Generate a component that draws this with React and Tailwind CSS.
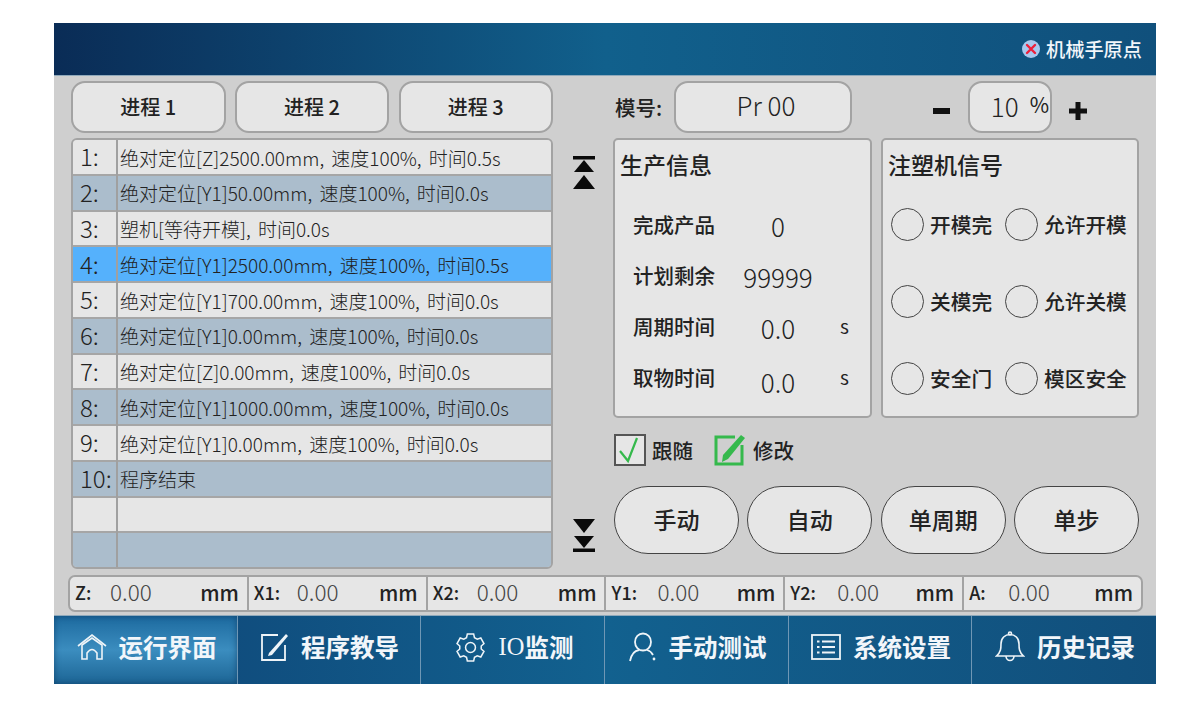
import React from "react";

const font = { fontFamily: '"Noto Sans CJK SC", "Noto Sans", sans-serif' };

const steps = [
  "绝对定位[Z]2500.00mm, 速度100%, 时间0.5s",
  "绝对定位[Y1]50.00mm, 速度100%, 时间0.0s",
  "塑机[等待开模], 时间0.0s",
  "绝对定位[Y1]2500.00mm, 速度100%, 时间0.5s",
  "绝对定位[Y1]700.00mm, 速度100%, 时间0.0s",
  "绝对定位[Y1]0.00mm, 速度100%, 时间0.0s",
  "绝对定位[Z]0.00mm, 速度100%, 时间0.0s",
  "绝对定位[Y1]1000.00mm, 速度100%, 时间0.0s",
  "绝对定位[Y1]0.00mm, 速度100%, 时间0.0s",
  "程序结束",
  "",
  "",
];

const axes = [
  { name: "Z:", w: "w-[35px]" },
  { name: "X1:", w: "w-[43px]" },
  { name: "X2:", w: "w-[44px]" },
  { name: "Y1:", w: "w-[46px]" },
  { name: "Y2:", w: "w-[47px]" },
  { name: "A:", w: "w-[39px]" },
];

function Row({ i, text }) {
  const active = i === 3;
  const bg = active ? "bg-[#55b1fc]" : i % 2 === 1 ? "bg-[#abbdcc]" : "bg-[#e6e6e6]";
  return (
    <div className={`flex h-[35.75px] items-center border-b-2 border-[#a6a6a6] last:border-b-0 ${bg}`}>
      <div className="flex h-full w-[43px] shrink-0 items-center pb-[1px] pl-[7px] text-[24px] font-light text-[#222]">
        {text ? `${i + 1}:` : ""}
      </div>
      <div className="h-[calc(100%+2px)] w-[2px] shrink-0 bg-[#a0a0a0]" />
      <div className="whitespace-nowrap pl-[2px] pt-[2px] text-[19px] font-light [word-spacing:3px] text-[#222]">{text}</div>
    </div>
  );
}

function Stat({ label, value, unit, cls }) {
  return (
    <div className="flex h-[51px] items-center pl-[18px]">
      <span className="w-[100px] text-[20.5px] font-medium text-[#222]">{label}</span>
      <span className={`w-[90px] text-center text-[26px] font-light leading-none text-[#222] ${cls}`}>{value}</span>
      <span className="ml-[17px] text-[19px] text-[#222]">{unit}</span>
    </div>
  );
}

function Signal({ label, w }) {
  return (
    <div className={`flex items-center ${w}`}>
      <div className="h-[33px] w-[33px] shrink-0 rounded-full border border-[#444] bg-[#e6e6e6]" />
      <span className="ml-[6px] whitespace-nowrap text-[20.7px] font-medium text-[#222]">{label}</span>
    </div>
  );
}

function Arrows({ up }) {
  return (
    <svg width="26" height="36" viewBox="0 0 26 36" fill="#0a0a0a">
      {up ? (
        <>
          <rect x="2" y="1" width="22" height="3.5" />
          <path d="M13 5 L23 17 H3 Z" />
          <path d="M13 20 L24 34 H2 Z" />
        </>
      ) : (
        <>
          <path d="M2 2 H24 L13 16 Z" />
          <path d="M3 19 H23 L13 31 Z" />
          <rect x="2" y="31.5" width="22" height="3.5" />
        </>
      )}
    </svg>
  );
}

function NavItem({ icon, label, active, cls }) {
  return (
    <div
      className={`flex h-full items-center justify-center gap-[12px] border-r border-[#6f97b5] pb-[6px] pl-[2px] last:border-r-0 ${cls} ${
        active ? "bg-gradient-to-b from-[#1c6a9f] via-[#3b8dbf] to-[#1c6595] shadow-[inset_0_0_6px_rgba(10,50,90,0.6)]" : ""
      }`}
    >
      {icon}
      <span className="whitespace-nowrap text-[24.5px] font-bold text-[#f2f6fa]">{label}</span>
    </div>
  );
}

const stroke = { fill: "none", stroke: "#eef4f8", strokeWidth: 1.6 };

export default function App() {
  return (
    <div className="h-[712px] w-full overflow-hidden bg-white pl-[54px] pt-[23px]" style={font}>
      <div className="flex h-[661px] w-[1102px] flex-col bg-[#cfcfcf]">
        {/* header */}
        <div className="flex h-[53px] shrink-0 items-center justify-end border-b border-[#8fa9bb] bg-gradient-to-r from-[#0a2c56] via-[#11608c] to-[#10507c] pr-[14px]">
          <svg width="18" height="18" viewBox="0 0 18 18" className="mr-[6px]">
            <circle cx="9" cy="9" r="9" fill="#a9c8ee" />
            <path d="M5 5 L13 13 M13 5 L5 13" stroke="#ee1f3a" strokeWidth="2.4" strokeLinecap="round" />
          </svg>
          <span className="text-[19.2px] font-medium text-[#f2f6fa]">机械手原点</span>
        </div>

        {/* body */}
        <div className="flex h-[499px] shrink-0 pl-[17px] pt-[5px]">
          <div className="flex w-[482px] shrink-0 flex-col">
            <div className="flex h-[52px] justify-between">
              {["进程 1", "进程 2", "进程 3"].map((t) => (
                <div
                  key={t}
                  className="flex w-[154.5px] items-center justify-center rounded-[14px] border-2 border-[#a3a3a3] bg-[#e6e6e6] text-[20px] font-medium text-[#222]"
                >
                  {t}
                </div>
              ))}
            </div>
            <div className="mt-[5px] h-[431px] overflow-hidden rounded-[6px] border-2 border-[#a3a3a3]">
              {steps.map((s, i) => (
                <Row key={i} i={i} text={s} />
              ))}
            </div>
          </div>

          <div className="flex w-[60px] shrink-0 flex-col items-center justify-between pb-[22px] pl-[2px] pt-[74px]">
            <Arrows up />
            <Arrows />
          </div>

          <div className="flex w-[526px] shrink-0 flex-col">
            <div className="flex h-[52px] items-center">
              <span className="ml-[2px] w-[59px] text-[20.5px] font-medium text-[#222]">模号:</span>
              <div className="flex h-full w-[178px] items-center justify-center rounded-[14px] border-2 border-[#a3a3a3] bg-[#e6e6e6] pb-[5px] pl-[6px] text-[26px] font-light text-[#222]">
                Pr 00
              </div>
              <div className="ml-[81px] mt-[8px] h-[6px] w-[17px] bg-[#111]" />
              <div className="ml-[18px] flex h-full w-[84px] items-center justify-end rounded-[14px] border-2 border-[#a3a3a3] bg-[#e6e6e6] pb-[4px] pr-[1px] text-[#222]">
                <span className="text-[26px] font-light">10</span>
                <span className="ml-[11px] text-[21px]">%</span>
              </div>
              <svg width="18" height="18" viewBox="0 0 18 18" className="ml-[17px] mt-[8px]" fill="#111">
                <path d="M6.5 0 H11.5 V6.5 H18 V11.5 H11.5 V18 H6.5 V11.5 H0 V6.5 H6.5 Z" />
              </svg>
            </div>

            <div className="mt-[5px] flex h-[280px] justify-between">
              <div className="w-[259px] rounded-[5px] border-2 border-[#a3a3a3] bg-[#e6e6e6]">
                <div className="pl-[5px] pt-[7px] text-[23px] font-medium leading-[34px] text-[#222]">生产信息</div>
                <div className="mt-[18px]">
                  <Stat label="完成产品" value="0" unit="" cls="pt-[3px]" />
                  <Stat label="计划剩余" value="99999" unit="" cls="pt-[3px]" />
                  <Stat label="周期时间" value="0.0" unit="s" cls="pt-[3px]" />
                  <Stat label="取物时间" value="0.0" unit="s" cls="pt-[9px]" />
                </div>
              </div>
              <div className="w-[258px] rounded-[5px] border-2 border-[#a3a3a3] bg-[#e6e6e6]">
                <div className="pl-[5px] pt-[7px] text-[23px] font-medium leading-[34px] text-[#222]">注塑机信号</div>
                <div className="mt-[27px] flex flex-col gap-[44px] pl-[8px]">
                  <div className="flex">
                    <Signal label="开模完" w="w-[114px]" />
                    <Signal label="允许开模" />
                  </div>
                  <div className="flex">
                    <Signal label="关模完" w="w-[114px]" />
                    <Signal label="允许关模" />
                  </div>
                  <div className="flex">
                    <Signal label="安全门" w="w-[114px]" />
                    <Signal label="模区安全" />
                  </div>
                </div>
              </div>
            </div>

            <div className="mt-[17px] flex h-[30px] items-center pl-[1px]">
              <svg width="32" height="32" viewBox="0 0 32 32">
                <rect x="1" y="1" width="30" height="30" fill="#e6e6e6" stroke="#555" strokeWidth="2" />
                <path d="M6 17 L14 27 L23 4" fill="none" stroke="#35b94c" strokeWidth="2.2" />
              </svg>
              <span className="ml-[6px] text-[20.5px] font-medium text-[#222]">跟随</span>
              <svg width="32" height="32" viewBox="0 0 32 32" className="ml-[21px]">
                <path d="M28 11 V30 H2 V3 H21" fill="none" stroke="#35b94c" strokeWidth="3" />
                <path d="M27 1 L31 4 L14 25 L8 28 L9 21 Z" fill="#35b94c" />
              </svg>
              <span className="ml-[7px] text-[20.5px] font-medium text-[#222]">修改</span>
            </div>

            <div className="mt-[21px] flex h-[68px] justify-between pl-[1px]">
              {["手动", "自动", "单周期", "单步"].map((t) => (
                <div
                  key={t}
                  className="flex w-[125px] items-center justify-center rounded-[34px] border border-[#444] bg-[#e6e6e6] pb-[2px] text-[23px] font-medium text-[#222]"
                >
                  {t}
                </div>
              ))}
            </div>
          </div>
        </div>

        {/* axis readout */}
        <div className="ml-[14px] flex h-[37px] w-[1075px] shrink-0 overflow-hidden rounded-[7px] border-2 border-[#a3a3a3] bg-[#e6e6e6]">
          {axes.map((a) => (
            <div key={a.name} className="flex flex-1 items-center border-r-2 border-[#a3a3a3] pb-[3px] pl-[5px] pr-[8px] text-[#222] last:border-r-0">
              <span className={`${a.w} shrink-0 text-[18px] font-medium`}>{a.name}</span>
              <span className="flex-1 text-[22.5px] font-light text-[#444]">0.00</span>
              <span className="text-[20.5px] font-medium">mm</span>
            </div>
          ))}
        </div>

        {/* bottom nav */}
        <div className="mt-[3px] flex h-[69px] shrink-0 border-t border-[#8fa9bb] bg-gradient-to-r from-[#0f4476] via-[#12618f] to-[#114f7c]">
          <NavItem
            active
            cls="w-[184px]"
            label="运行界面"
            icon={
              <svg width="30" height="28" viewBox="0 0 30 28" {...stroke}>
                <path d="M1 13 L15 2 L29 13" />
                <path d="M5 12 L15 5 L25 12 V26 H20 V20 Q15 13 10 20 V26 H5 Z" />
              </svg>
            }
          />
          <NavItem
            cls="w-[183px]"
            label="程序教导"
            icon={
              <svg width="28" height="28" viewBox="0 0 28 28" {...stroke}>
                <path d="M24 12 V27 H1 V2 H17" strokeWidth="1.8" />
                <path d="M25 1 L27 3 L11 22 L7 23 L8 20 Z" fill="#eef4f8" stroke="none" />
              </svg>
            }
          />
          <NavItem
            cls="w-[184px]"
            label={<span className="flex items-center"><span className="font-normal" style={{ fontFamily: '"Liberation Serif", serif' }}>IO</span>监测</span>}
            icon={
              <svg width="33" height="33" viewBox="0 0 24 24" {...stroke} strokeWidth="1.1">
                <path d="M9.7 2.2 h4.6 l.6 2.7 2 1.1 2.6-.9 2.3 4-2 1.8 v2.2 l2 1.8-2.3 4-2.6-.9-2 1.1-.6 2.7 h-4.6 l-.6-2.7-2-1.1-2.6.9-2.3-4 2-1.8 v-2.2 l-2-1.8 2.3-4 2.6.9 2-1.1 z" />
                <circle cx="12" cy="12" r="3.6" />
              </svg>
            }
          />
          <NavItem
            cls="w-[184px]"
            label="手动测试"
            icon={
              <svg width="28" height="30" viewBox="0 0 28 30" {...stroke} strokeWidth="1.8">
                <ellipse cx="14" cy="10" rx="8" ry="8.5" />
                <path d="M1 29 Q3 19 10 18 M18 18 Q22 19 24 23" />
                <circle cx="25" cy="27" r="1.4" fill="#eef4f8" stroke="none" />
              </svg>
            }
          />
          <NavItem
            cls="w-[183px]"
            label="系统设置"
            icon={
              <svg width="30" height="26" viewBox="0 0 30 26" {...stroke} strokeWidth="1.8">
                <rect x="1" y="1" width="28" height="24" />
                <path d="M11 7.5 H24 M11 13 H24 M11 18.5 H24 M6 7.5 H8.5 M6 13 H8.5 M6 18.5 H8.5" strokeWidth="2" />
              </svg>
            }
          />
          <NavItem
            cls="flex-1"
            label="历史记录"
            icon={
              <svg width="30" height="32" viewBox="0 0 30 32" {...stroke} strokeWidth="1.6">
                <path d="M1.5 25 C6 21 6 17 6 13 C6 7 10 3.5 15 3.5 C20 3.5 24 7 24 13 C24 17 24 21 28.5 25 Z" />
                <circle cx="15" cy="2.5" r="1.5" />
                <path d="M11 25 A4 4.5 0 0 0 19 25" />
              </svg>
            }
          />
        </div>
      </div>
    </div>
  );
}
